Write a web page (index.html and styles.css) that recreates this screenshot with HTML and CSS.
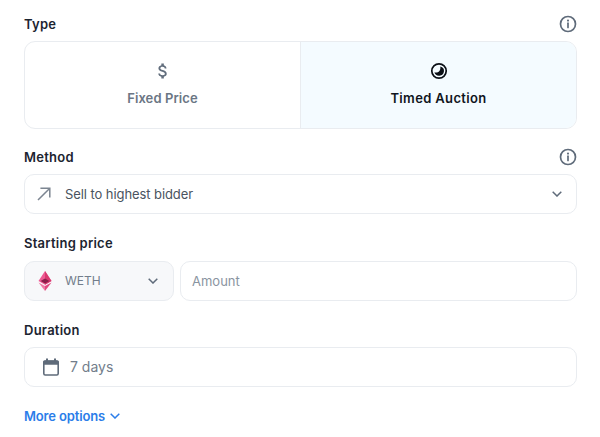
FILE: index.html
```html
<!DOCTYPE html>
<html lang="en">
<head>
<meta charset="utf-8">
<title>Listing</title>
<link rel="stylesheet" href="styles.css">
</head>
<body>
<main class="form">
  <section class="field field-type">
    <div class="label-row">
      <span class="label">Type</span>
      <svg class="info" viewBox="0 0 18 18"><circle cx="9" cy="9" r="7.5"/><path d="M9 8.2v4.3"/><circle class="dot" cx="9" cy="5.6" r="1.05"/></svg>
    </div>
    <div class="types">
      <div class="type">
        <svg class="dollar" viewBox="0 0 24 24"><path d="M11.8 10.9c-2.27-.59-3-1.2-3-2.15 0-1.09 1.01-1.85 2.7-1.85 1.78 0 2.44.85 2.5 2.1h2.21c-.07-1.72-1.12-3.3-3.21-3.81V3h-3v2.16c-1.94.42-3.5 1.68-3.5 3.61 0 2.31 1.91 3.46 4.7 4.13 2.5.6 3 1.48 3 2.41 0 .69-.49 1.79-2.7 1.79-2.06 0-2.87-.92-2.98-2.1h-2.2c.12 2.19 1.76 3.42 3.68 3.83V21h3v-2.15c1.95-.37 3.5-1.5 3.5-3.55 0-2.84-2.43-3.81-4.7-4.4z"/></svg>
        <span class="type-name">Fixed Price</span>
      </div>
      <div class="type type-active">
        <svg class="clock" viewBox="0 0 18 18"><circle cx="9" cy="9" r="7.2"/><path class="moon" d="M10.2 4.4A4.7 4.7 0 0 1 9 13.7a4.7 4.7 0 0 1-4.6-3.4c3.4 1 6.9-1.7 5.8-5.9z"/></svg>
        <span class="type-name">Timed Auction</span>
      </div>
    </div>
  </section>

  <section class="field field-method">
    <div class="label-row">
      <span class="label">Method</span>
      <svg class="info" viewBox="0 0 18 18"><circle cx="9" cy="9" r="7.5"/><path d="M9 8.2v4.3"/><circle class="dot" cx="9" cy="5.6" r="1.05"/></svg>
    </div>
    <div class="box box-select">
      <svg class="arrow" viewBox="0 0 14 14"><path d="M1 13 12.8 1.2M3.4 1.2h9.4v9.4"/></svg>
      <span class="value value-dark">Sell to highest bidder</span>
      <svg class="chev" viewBox="0 0 10 6"><path d="M.7.7 5 5l4.3-4.3"/></svg>
    </div>
  </section>

  <section class="field field-price">
    <span class="label">Starting price</span>
    <div class="price-row">
      <div class="box box-token">
        <svg class="eth" viewBox="0 0 14 20">
          <path fill="#ee5a93" d="M7 0 .5 10 7 13.7 13.5 10z"/>
          <path fill="#d9386f" d="M7 0v13.7l6.5-3.7z"/>
          <path fill="#8a1f4a" d="M7 7.5 2.6 10 7 12.6 11.4 10z"/>
          <path fill="#f07aa6" d="M.5 11.4 7 20v-5z"/>
          <path fill="#e04a80" d="M13.5 11.4 7 20v-5z"/>
        </svg>
        <span class="value value-muted">WETH</span>
        <svg class="chev" viewBox="0 0 10 6"><path d="M.7.7 5 5l4.3-4.3"/></svg>
      </div>
      <div class="box box-amount">
        <span class="value value-faint">Amount</span>
      </div>
    </div>
  </section>

  <section class="field field-duration">
    <span class="label">Duration</span>
    <div class="box box-duration">
      <svg class="cal" viewBox="0 0 18 18"><path class="cal-fill" d="M1 4.2A1.7 1.7 0 0 1 2.7 2.5h12.6A1.7 1.7 0 0 1 17 4.2v2.6H1z"/><rect x="1.8" y="3" width="14.4" height="14" rx="1.4"/><path class="cal-fill" d="M4 .5h2v3H4zM12 .5h2v3h-2z"/></svg>
      <span class="duration-text">7 days</span>
    </div>
  </section>

  <div class="more">
    <span>More options</span>
    <svg class="chev-blue" viewBox="0 0 10 6"><path d="M.7.7 5 5l4.3-4.3"/></svg>
  </div>
</main>
</body>
</html>
```
FILE: styles.css
```css
* { box-sizing: border-box; }
html, body { margin: 0; padding: 0; background: #fff; }
body {
  width: 600px;
  height: 437px;
  overflow: hidden;
  font-family: Inter, "Noto Sans", "Liberation Sans", sans-serif;
  color: #1f2937;
}
.form { padding: 15px 23px 0 24px; }
.field { display: flex; flex-direction: column; }
.field-method { margin-top: 19px; }
.field-price { margin-top: 20px; }
.field-duration { margin-top: 20px; }
.label-row { display: flex; justify-content: space-between; align-items: center; height: 18px; }
.label { font-size: 13px; font-weight: 600; line-height: 18px; letter-spacing: .25px; color: #1c2430; }
.info { width: 18px; height: 18px; fill: none; stroke: #5f6b7a; stroke-width: 1.7; stroke-linecap: round; }
.info .dot { fill: #5f6b7a; stroke: none; }
.types {
  display: grid;
  grid-template-columns: 275px 1fr;
  margin-top: 8px;
  height: 88px;
  border: 1px solid #e9ecf0;
  border-radius: 11px;
  overflow: hidden;
}
.type { display: flex; flex-direction: column; align-items: center; padding-top: 19px; }
.type-active { background: #f4fbff; border-left: 1px solid #e9ecf0; }
.dollar { width: 20px; height: 20px; fill: #626e7d; }
.clock { width: 18px; height: 18px; margin: 1px 0; fill: none; stroke: #0b0f16; stroke-width: 1.7; }
.clock .moon { fill: #0b0f16; stroke: none; }
.type-name { margin-top: 8px; font-size: 13px; line-height: 18px; font-weight: 600; letter-spacing: .1px; color: #6b7684; }
.type-active .type-name { color: #10151d; letter-spacing: .35px; }
.box {
  display: flex;
  align-items: center;
  height: 40px;
  border: 1px solid #e9ecf0;
  border-radius: 10px;
  background: #fff;
}
.field-method .box { margin-top: 8px; }
.box-select { padding: 0 14px 0 12px; }
.arrow { width: 14px; height: 14px; flex: none; fill: none; stroke: #7c8591; stroke-width: 1.5; }
.value { font-size: 13px; line-height: 18px; }
.value-dark { margin-left: 14px; flex: 1; color: #4a5360; letter-spacing: -.08px; }
.value-muted { margin-left: 13px; flex: 1; color: #727d8b; font-size: 12px; }
.value-faint { color: #8a94a1; }
.chev { width: 10px; height: 6px; flex: none; fill: none; stroke: #5f6b7a; stroke-width: 1.5; }
.price-row { display: flex; gap: 6px; margin-top: 9px; }
.box-token { width: 150px; flex: none; padding: 0 15px 0 13px; background: #f7f8fa; }
.eth { width: 14px; height: 20px; flex: none; }
.box-amount { flex: 1; padding-left: 11px; }
.box-duration { margin-top: 8px; height: 40px; padding-left: 17px; }
.cal { width: 18px; height: 18px; flex: none; fill: none; stroke: #5f6b7a; stroke-width: 1.6; }
.cal-fill { fill: #5f6b7a; stroke: none; }
.duration-text { margin-left: 10px; font-size: 14px; line-height: 18px; color: #727d8b; }
.more { display: flex; align-items: center; gap: 5px; margin-top: 20px; font-size: 13px; line-height: 18px; font-weight: 600; letter-spacing: -.15px; color: #2b7de9; }
.chev-blue { width: 10px; height: 6px; fill: none; stroke: #2b7de9; stroke-width: 1.5; }
```
